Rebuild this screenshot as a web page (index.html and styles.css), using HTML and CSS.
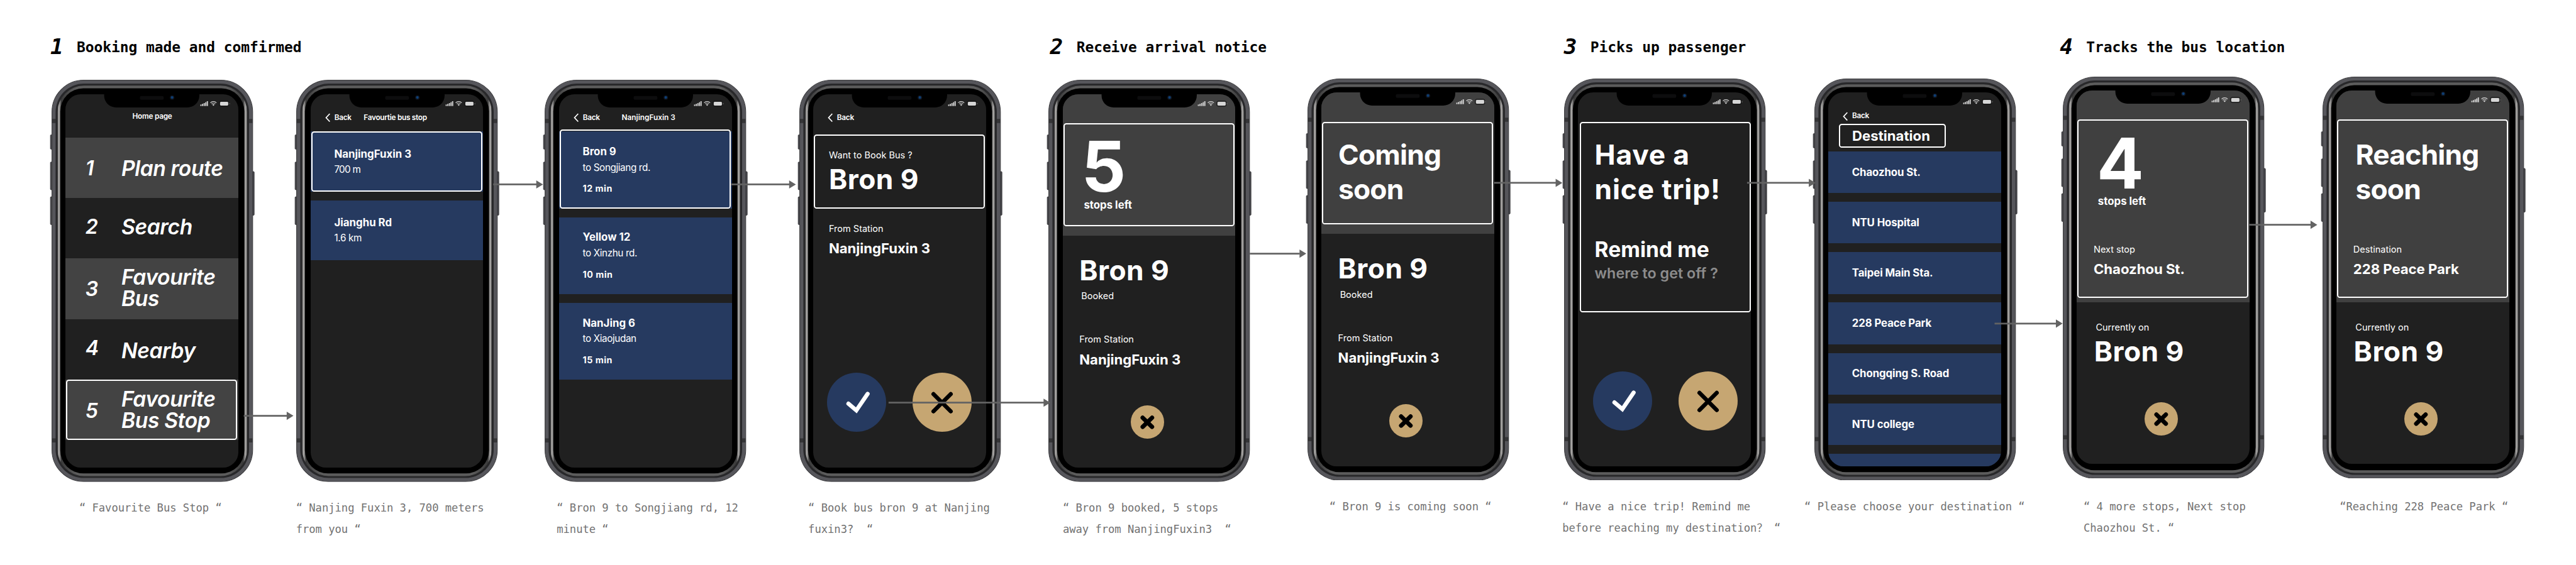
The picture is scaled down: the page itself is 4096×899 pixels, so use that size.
FILE: index.html
```
<!DOCTYPE html>
<html lang="en">
<head>
<meta charset="utf-8">
<title>Bus booking flow</title>
<link rel="stylesheet" href="styles.css">
</head>
<body>
<svg class="defs" aria-hidden="true">
  <defs>
    <linearGradient id="rim" x1="0" x2="1" y1="0" y2="0">
      <stop offset="0" stop-color="#4c4c4c"/>
      <stop offset=".006" stop-color="#b4b2b0"/>
      <stop offset=".012" stop-color="#8a8988"/>
      <stop offset=".02" stop-color="#3a3a3a"/>
      <stop offset=".1" stop-color="#5c5c5c"/>
      <stop offset=".9" stop-color="#5c5c5c"/>
      <stop offset=".98" stop-color="#3a3a3a"/>
      <stop offset=".988" stop-color="#8a8988"/>
      <stop offset=".994" stop-color="#b4b2b0"/>
      <stop offset="1" stop-color="#4c4c4c"/>
    </linearGradient>
    <symbol id="frame" viewBox="-4 0 427 837">
      <g fill="#47474c" stroke="#2e2e30" stroke-width="1">
        <rect x="-2.5" y="114.5" width="6" height="30" rx="1.5"/>
        <rect x="-2.5" y="171" width="6" height="58" rx="1.5"/>
        <rect x="-2.5" y="243.500" width="6" height="58" rx="1.5"/>
        <rect x="415.500" y="191" width="6" height="91" rx="1.5"/>
      </g>
      <rect x=".7" y=".7" width="417.6" height="835.6" rx="66" fill="#56565b" stroke="#3b3b3e" stroke-width="1.4"/>
      <path d="M1 81.500h8v8.500h-8zM410 81.500h8v8.500h-8zM1 746.500h8v8.500h-8zM410 746.500h8v8.500h-8z" fill="#353537"/>
      <rect x="8.300" y="8" width="402.400" height="821" rx="59" fill="#28282a"/>
      <rect x="12.300" y="12.200" width="394.400" height="812.600" rx="55" fill="url(#rim)"/>
      <rect x="18" y="17.700" width="383" height="801.600" rx="48" fill="#000"/>
    </symbol>
    <symbol id="notch" viewBox="0 0 359.200 36">
      <path d="M80.500-1H278.700V2.500A25 25 0 0 1 253.700 27.500H105.500A25 25 0 0 1 80.500 2.500Z" fill="#000"/>
      <rect x="155" y="3.500" width="49.500" height="8" rx="3" fill="#0d0d0e"/>
      <circle cx="222" cy="6.900" r="4.600" fill="#10161f"/>
      <circle cx="222" cy="6.700" r="2.700" fill="#0d3f78"/>
      <g fill="#d6d6d6">
        <rect x="280.800" y="21.200" width="2.400" height="3.300" rx=".6"/>
        <rect x="284.200" y="19.800" width="2.400" height="4.700" rx=".6"/>
        <rect x="287.600" y="18.200" width="2.400" height="6.300" rx=".6"/>
        <rect x="291" y="16.300" width="2.400" height="8.200" rx=".6"/>
        <rect x="294.200" y="14.400" width="2.400" height="10.100" rx=".6"/>
        <path d="M308 24.200l-2.400-2.600a3.500 3.500 0 0 1 4.800 0z"/>
        <rect x="321.800" y="15.800" width="17" height="7.600" rx="2"/>
      </g>
      <path d="M301.600 17.800a9.200 9.200 0 0 1 12.800 0M304 20.200a5.800 5.800 0 0 1 8 0" fill="none" stroke="#d6d6d6" stroke-width="1.500"/>
      <rect x="320.200" y="14.200" width="20.200" height="10.800" rx="3.200" fill="none" stroke="#111" stroke-width="1.200"/>
      <path d="M341.600 18v3.200" stroke="#777" stroke-width="1"/>
    </symbol>
    <symbol id="chevron" viewBox="0 0 11 19"><path d="M9.600 1.300L2 9.500l7.600 8.200" fill="none" stroke="#fff" stroke-width="2.300"/></symbol>
    <symbol id="check" viewBox="0 0 123 123"><path d="M44.500 64.500L61 78.500L84.500 44" fill="none" stroke="#fff" stroke-width="8.500" stroke-linecap="round"/></symbol>
    <symbol id="cross" viewBox="0 0 123 123"><path d="M43.500 44.500L79.500 80.500M79.500 44.500L43.500 80.500" fill="none" stroke="#000" stroke-width="8.500" stroke-linecap="round"/></symbol>
    <symbol id="cross-bold" viewBox="0 0 69 69"><path d="M24.500 25.500L44 44.500M44 25.500L24.500 44.500" fill="none" stroke="#000" stroke-width="8.800" stroke-linecap="round"/></symbol>
  </defs>
</svg>

<main class="board">
  <h2 class="stage stage-1"><span class="stage-no">1</span>Booking made and comfirmed</h2>
  <h2 class="stage stage-2"><span class="stage-no">2</span>Receive arrival notice</h2>
  <h2 class="stage stage-3"><span class="stage-no">3</span>Picks up passenger</h2>
  <h2 class="stage stage-4"><span class="stage-no">4</span>Tracks the bus location</h2>

  <figure class="step low">
    <div class="phone"><svg class="frame"><use href="#frame"/></svg>
      <div class="screen">
        <svg class="notch"><use href="#notch"/></svg>
        <div class="home-title">Home page</div>
        <div class="row row-1 grey"><b>1</b><span>Plan route</span></div>
        <div class="row row-2"><b>2</b><span>Search</span></div>
        <div class="row row-3 grey"><b>3</b><span>Favourite<br>Bus</span></div>
        <div class="row row-4"><b>4</b><span>Nearby</span></div>
        <div class="row row-5 grey focus"><b>5</b><span>Favourite<br>Bus Stop</span></div>
      </div>
    </div>
    <figcaption class="cap-1">“ Favourite Bus Stop “</figcaption>
  </figure>

  <figure class="step low">
    <div class="phone"><svg class="frame"><use href="#frame"/></svg>
      <div class="screen">
        <svg class="notch"><use href="#notch"/></svg>
        <div class="nav"><svg><use href="#chevron"/></svg><span>Back</span><span class="nav-title">Favourtie bus stop</span></div>
        <div class="cards">
          <div class="card stop focus"><div class="name">NanjingFuxin 3</div><div class="sub sub-t">700 m</div></div>
          <div class="card stop"><div class="name">Jianghu Rd</div><div class="sub">1.6 km</div></div>
        </div>
      </div>
    </div>
    <figcaption class="cap-2">“ Nanjing Fuxin 3, 700 meters<br>from you “</figcaption>
  </figure>

  <figure class="step low">
    <div class="phone"><svg class="frame"><use href="#frame"/></svg>
      <div class="screen">
        <svg class="notch"><use href="#notch"/></svg>
        <div class="nav nav-wide"><svg><use href="#chevron"/></svg><span>Back</span><span class="nav-title">NanjingFuxin 3</span></div>
        <div class="cards">
          <div class="card bus focus"><div class="name">Bron 9</div><div class="sub">to Songjiang rd.</div><div class="eta">12 min</div></div>
          <div class="card bus"><div class="name">Yellow 12</div><div class="sub">to Xinzhu rd.</div><div class="eta">10 min</div></div>
          <div class="card bus"><div class="name">NanJing 6</div><div class="sub">to Xiaojudan</div><div class="eta">15 min</div></div>
        </div>
      </div>
    </div>
    <figcaption class="cap-3">“ Bron 9 to Songjiang rd, 12<br>minute “</figcaption>
  </figure>

  <figure class="step low">
    <div class="phone"><svg class="frame"><use href="#frame"/></svg>
      <div class="screen">
        <svg class="notch"><use href="#notch"/></svg>
        <div class="nav"><svg><use href="#chevron"/></svg><span>Back</span></div>
        <div class="ask focus"><div class="label">Want to Book Bus ?</div><div class="big">Bron 9</div></div>
        <div class="from"><div class="label">From Station</div><div class="place">NanjingFuxin 3</div></div>
        <div class="actions"><i class="dot blue"><svg><use href="#check"/></svg></i><i class="dot gold"><svg><use href="#cross"/></svg></i></div>
      </div>
    </div>
    <figcaption class="cap-4">“ Book bus bron 9 at Nanjing<br>fuxin3?&nbsp; “</figcaption>
  </figure>

  <figure class="step low">
    <div class="phone"><svg class="frame"><use href="#frame"/></svg>
      <div class="screen">
        <svg class="notch"><use href="#notch"/></svg>
        <div class="hero focus"><div class="count five">5</div><div class="left">stops left</div></div>
        <div class="booked"><div class="big">Bron 9</div><div class="label state">Booked</div><div class="label station">From Station</div><div class="place">NanjingFuxin 3</div></div>
        <i class="dot gold small"><svg><use href="#cross-bold"/></svg></i>
      </div>
    </div>
    <figcaption class="cap-5">“ Bron 9 booked, 5 stops<br>away from NanjingFuxin3&nbsp; “</figcaption>
  </figure>

  <figure class="step mid">
    <div class="phone"><svg class="frame"><use href="#frame"/></svg>
      <div class="screen">
        <svg class="notch"><use href="#notch"/></svg>
        <div class="hero focus"><div class="message tight">Coming<br>soon</div></div>
        <div class="booked"><div class="big">Bron 9</div><div class="label state">Booked</div><div class="label station">From Station</div><div class="place">NanjingFuxin 3</div></div>
        <i class="dot gold small"><svg><use href="#cross-bold"/></svg></i>
      </div>
    </div>
    <figcaption class="cap-6">“ Bron 9 is coming soon “</figcaption>
  </figure>

  <figure class="step mid">
    <div class="phone"><svg class="frame"><use href="#frame"/></svg>
      <div class="screen">
        <svg class="notch"><use href="#notch"/></svg>
        <div class="trip focus"><div class="message loose">Have a<br>nice trip!</div><div class="remind">Remind me</div><div class="where">where to get off ?</div></div>
        <div class="actions shifted"><i class="dot blue"><svg><use href="#check"/></svg></i><i class="dot gold"><svg><use href="#cross"/></svg></i></div>
      </div>
    </div>
    <figcaption class="cap-7">“ Have a nice trip! Remind me<br>before reaching my destination？ “</figcaption>
  </figure>

  <figure class="step mid">
    <div class="phone"><svg class="frame"><use href="#frame"/></svg>
      <div class="screen">
        <svg class="notch"><use href="#notch"/></svg>
        <div class="nav nav-short"><svg><use href="#chevron"/></svg><span>Back</span></div>
        <div class="dest">Destination</div>
        <div class="cards places">
          <div class="card">Chaozhou St.</div>
          <div class="card">NTU Hospital</div>
          <div class="card">Taipei Main Sta.</div>
          <div class="card">228 Peace Park</div>
          <div class="card">Chongqing S. Road</div>
          <div class="card">NTU college</div>
          <div class="card"></div>
        </div>
      </div>
    </div>
    <figcaption class="cap-8">“ Please choose your destination “</figcaption>
  </figure>

  <figure class="step">
    <div class="phone"><svg class="frame"><use href="#frame"/></svg>
      <div class="screen">
        <svg class="notch"><use href="#notch"/></svg>
        <div class="hero tall focus"><div class="count four">4</div><div class="left">stops left</div><div class="label next">Next stop</div><div class="place">Chaozhou St.</div></div>
        <div class="current"><div class="label">Currently on</div><div class="big">Bron 9</div></div>
        <i class="dot gold small"><svg><use href="#cross-bold"/></svg></i>
      </div>
    </div>
    <figcaption class="cap-9">“ 4 more stops, Next stop<br>Chaozhou St. “</figcaption>
  </figure>

  <figure class="step">
    <div class="phone"><svg class="frame"><use href="#frame"/></svg>
      <div class="screen">
        <svg class="notch"><use href="#notch"/></svg>
        <div class="hero tall focus"><div class="message tight">Reaching<br>soon</div><div class="label next">Destination</div><div class="place">228 Peace Park</div></div>
        <div class="current"><div class="label">Currently on</div><div class="big">Bron 9</div></div>
        <i class="dot gold small"><svg><use href="#cross-bold"/></svg></i>
      </div>
    </div>
    <figcaption class="cap-10">“Reaching 228 Peace Park “</figcaption>
  </figure>

  <svg class="arrows" viewBox="0 0 5359 1176" aria-hidden="true">
    <g stroke="#636363" stroke-width="3.600">
      <path d="M507 865.600H598M1026 384H1117M1520.500 384H1643M1848.500 838.300H2172M2600 528H2704M3108.500 380.700H3237M3634.500 380.700H3764M4149.500 673.600H4278M4679 468H4807"/>
    </g>
    <g fill="#636363">
      <path d="M596.400 857l14 8.600l-14 8.600zM1115.600 375.400l14 8.600l-14 8.600zM1641.700 375.400l14 8.600l-14 8.600zM2171 829.700l14 8.600l-14 8.600zM2703.500 519.400l14 8.600l-14 8.600zM3236.300 372.100l14 8.600l-14 8.600zM3763 372.100l14 8.600l-14 8.600zM4277 665l14 8.600l-14 8.600zM4806.800 459.400l14 8.600l-14 8.600z"/>
    </g>
  </svg>
</main>
</body>
</html>
```
FILE: styles.css
```
/* The board is 535.9rem wide and always fills the window */
html { font-size: calc(100vw / 535.9); }
* { box-sizing: border-box; }
body { margin: 0; background: #fff; overflow: hidden; }
.defs { position: absolute; width: 0; height: 0; }

.board {
  position: relative;
  width: 535.9rem;
  height: 117.6rem;
  padding-left: 10.67rem;
  display: grid;
  grid-template-columns: 51.01rem 51.69rem 52.87rem 51.91rem 53.82rem 53.4rem 52.06rem 51.69rem 54.02rem 41.9rem;
  grid-template-rows: 15.9rem auto;
  align-items: start;
}

.stage {
  grid-row: 1;
  margin: 0;
  padding-top: 7.45rem;
  display: flex;
  align-items: flex-start;
  white-space: nowrap;
  font: bold 3rem/4.82rem "DejaVu Sans Mono", monospace;
  letter-spacing: -0.006rem;
  color: #000;
}
.stage-no { flex: none; width: 5.5rem; font-size: 4.5rem; line-height: 4.5rem; font-style: italic; }
.stage-1 { grid-column: 1; margin-left: -.2rem; }
.stage-2 { grid-column: 5; margin-left: .3rem; }
.stage-3 { grid-column: 7; margin-left: 0; }
.stage-4 { grid-column: 9; margin-left: -.6rem; }

.step { grid-row: 2; margin: 0; }
.low { padding-top: .7rem; }
.mid { padding-top: .4rem; }
.phone { position: relative; width: 41.9rem; height: 83.7rem; padding: 2.97rem 3.04rem 2.98rem 2.94rem; }
.frame { position: absolute; left: -.4rem; top: 0; width: 42.7rem; height: 83.7rem; }
.screen {
  position: relative;
  height: 77.75rem;
  border-radius: 3.2rem;
  overflow: hidden;
  background: #202020;
  color: #fff;
  font: 400 1.9rem/1 Inter, sans-serif;
  white-space: nowrap;
}
.notch { position: absolute; z-index: 2; left: 0; top: 0; width: 35.92rem; height: 3.6rem; }

figcaption {
  margin-top: 3.17rem;
  font: 2.25rem/4.5rem "DejaVu Sans Mono", "Noto Sans CJK SC", monospace;
  letter-spacing: -.005rem;
  color: #727272;
  white-space: nowrap;
}
.cap-1 { margin-left: 5.8rem; }
.cap-2 { margin-left: -.1rem; }
.cap-3 { margin-left: 2.45rem; }
.cap-4 { margin-left: 1.9rem; }
.cap-5 { margin-left: 2.95rem; }
.cap-6 { margin-left: 4.6rem; }
.cap-7 { margin-left: -.35rem; }
.cap-8 { margin-left: -2.05rem; }
.cap-9 { margin: 3.57rem 0 0 4.35rem; }
.cap-10 { margin: 3.57rem 0 0 3.6rem; }

/* white selection ring */
.focus { position: relative; }
.focus::after {
  content: "";
  position: absolute;
  inset: 0 .2rem 0 .15rem;
  border: .3rem solid #fff;
  border-radius: .6rem;
}

/* home menu */
.home-title {
  height: 9.07rem;
  padding: 3.95rem 0 0 .2rem;
  text-align: center;
  font-size: 1.55rem;
  font-weight: 600;
  letter-spacing: -.02em;
}
.row { height: 12.6rem; display: grid; grid-template-columns: 7.5rem 1fr; align-items: center; padding-left: 4.15rem; font-weight: 600; font-style: italic; }
.row b { font-size: 4.2rem; font-weight: 600; }
.row span { font-size: 4.4rem; line-height: 4.48rem; letter-spacing: -.012em; }
.grey { background: #434343; }
.row-1 { padding-top: .4rem; }
.row-2 { padding-bottom: .7rem; }
.row-3 span { margin-bottom: .46rem; }
.row-4 b { margin-bottom: .6rem; }
.row-4 span { margin-top: .5rem; }
.row-5 b { margin-top: .4rem; }
.row-5 span { margin-bottom: .1rem; }
.row-5.focus::after { inset: 0 .18rem 0 .08rem; }

/* navigation */
.nav { height: 7.83rem; padding: 2.11rem 0 0 3rem; display: flex; align-items: center; font-size: 1.55rem; font-weight: 600; letter-spacing: -.025em; }
.nav svg { width: 1.1rem; height: 1.9rem; margin-right: .85rem; }
.nav-title { margin-left: 2.55rem; }
.nav-wide .nav-title { margin-left: 4.55rem; letter-spacing: 0; }
.nav-short { height: 6.55rem; padding-top: 3.39rem; }

/* lists */
.cards { display: flex; flex-direction: column; gap: 1.85rem; }
.card { background: #263a60; padding-left: 4.92rem; }
.stop { height: 12.46rem; padding-top: 3.56rem; }
.bus { height: 16rem; padding-top: 3.1rem; }
.name { font-size: 2.2rem; font-weight: 700; }
.sub { margin-top: 1.14rem; font-size: 2rem; letter-spacing: -.025em; }
.sub-t { letter-spacing: -.05em; }
.eta { margin-top: 2.55rem; font-size: 1.87rem; font-weight: 700; letter-spacing: .035em; }
.bus.focus::after { inset: -.4rem .15rem -.1rem .15rem; }
.places { gap: 1.8rem; margin-top: .75rem; }
.places .card { height: 8.7rem; flex: none; display: flex; align-items: center; font-size: 2.2rem; font-weight: 700; letter-spacing: -.006em; }
.dest {
  width: 22.23rem;
  height: 4.93rem;
  margin-left: 2.2rem;
  padding-left: 2.5rem;
  border: .3rem solid #fff;
  border-radius: .6rem;
  display: flex;
  align-items: center;
  font-size: 2.9rem;
  font-weight: 700;
}

/* text styles */
.label { font-size: 1.9rem; }
.place { font-size: 2.9rem; font-weight: 700; letter-spacing: -.002em; }
.big { font-size: 5.8rem; font-weight: 700; letter-spacing: .01em; }
.message { font-size: 5.8rem; line-height: 7.18rem; font-weight: 700; }
.tight { letter-spacing: -.018em; }
.loose { letter-spacing: .018em; }

/* booking prompt */
.ask { height: 15.42rem; margin-top: .64rem; padding: 3.36rem 0 0 3.26rem; }
.ask .big { margin-top: 1.12rem; }
.from { padding: 3.22rem 0 0 3.26rem; }
.from .place { margin-top: 1.62rem; }

.actions { position: absolute; left: 2.88rem; bottom: 7.47rem; display: flex; gap: 5.54rem; }
.shifted { left: 3.08rem; bottom: 7.34rem; }
.dot { width: 12.3rem; height: 12.3rem; border-radius: 50%; display: block; }
.dot svg { display: block; width: 100%; height: 100%; }
.blue { background: #263a60; }
.gold { background: #c6a672; }
.small { position: absolute; left: 14.1rem; top: 64.85rem; width: 6.95rem; height: 6.95rem; }

/* arrival and tracking panels */
.hero { height: 29.47rem; padding-left: 3.5rem; background: #404040; }
.hero.focus::after { top: 6.07rem; bottom: 1.97rem; }
.count { padding: 9.35rem 0 0 .4rem; font-size: 14.5rem; line-height: 11.6rem; font-weight: 700; }
.four { padding-left: .65rem; }
.left { margin: 1.04rem 0 0 .9rem; font-size: 2.2rem; font-weight: 700; }
.hero .message { padding-top: 9.39rem; }
.tall { height: 44.09rem; }
.tall.focus::after { top: 6.03rem; bottom: .89rem; }
.tall .next { margin-top: 7.98rem; }
.tall .place { margin-top: 1.69rem; }
.tall .message { padding: 9.79rem 0 0 .46rem; }
.tall .message + .next { margin-top: 8.02rem; }

.booked { padding: 4.31rem 0 0 3.46rem; }
.state { margin: 1.61rem 0 0 .4rem; }
.station { margin-top: 7.09rem; }
.booked .place { margin-top: 1.71rem; }

.current { padding: 4.3rem 0 0 3.6rem; }
.current .label { margin-left: .35rem; }
.current .big { margin-top: 1.1rem; }

.trip { height: 45.79rem; padding: 9.39rem 0 0 3.44rem; }
.trip.focus::after { inset: 6.09rem 0 0 .3rem; }
.remind { margin-top: 6.72rem; font-size: 4.4rem; font-weight: 700; }
.where { margin-top: 1.22rem; font-size: 3.05rem; font-weight: 600; color: #8c8c8c; }

.arrows { position: absolute; left: 0; top: 0; width: 535.9rem; height: 117.6rem; }
```
